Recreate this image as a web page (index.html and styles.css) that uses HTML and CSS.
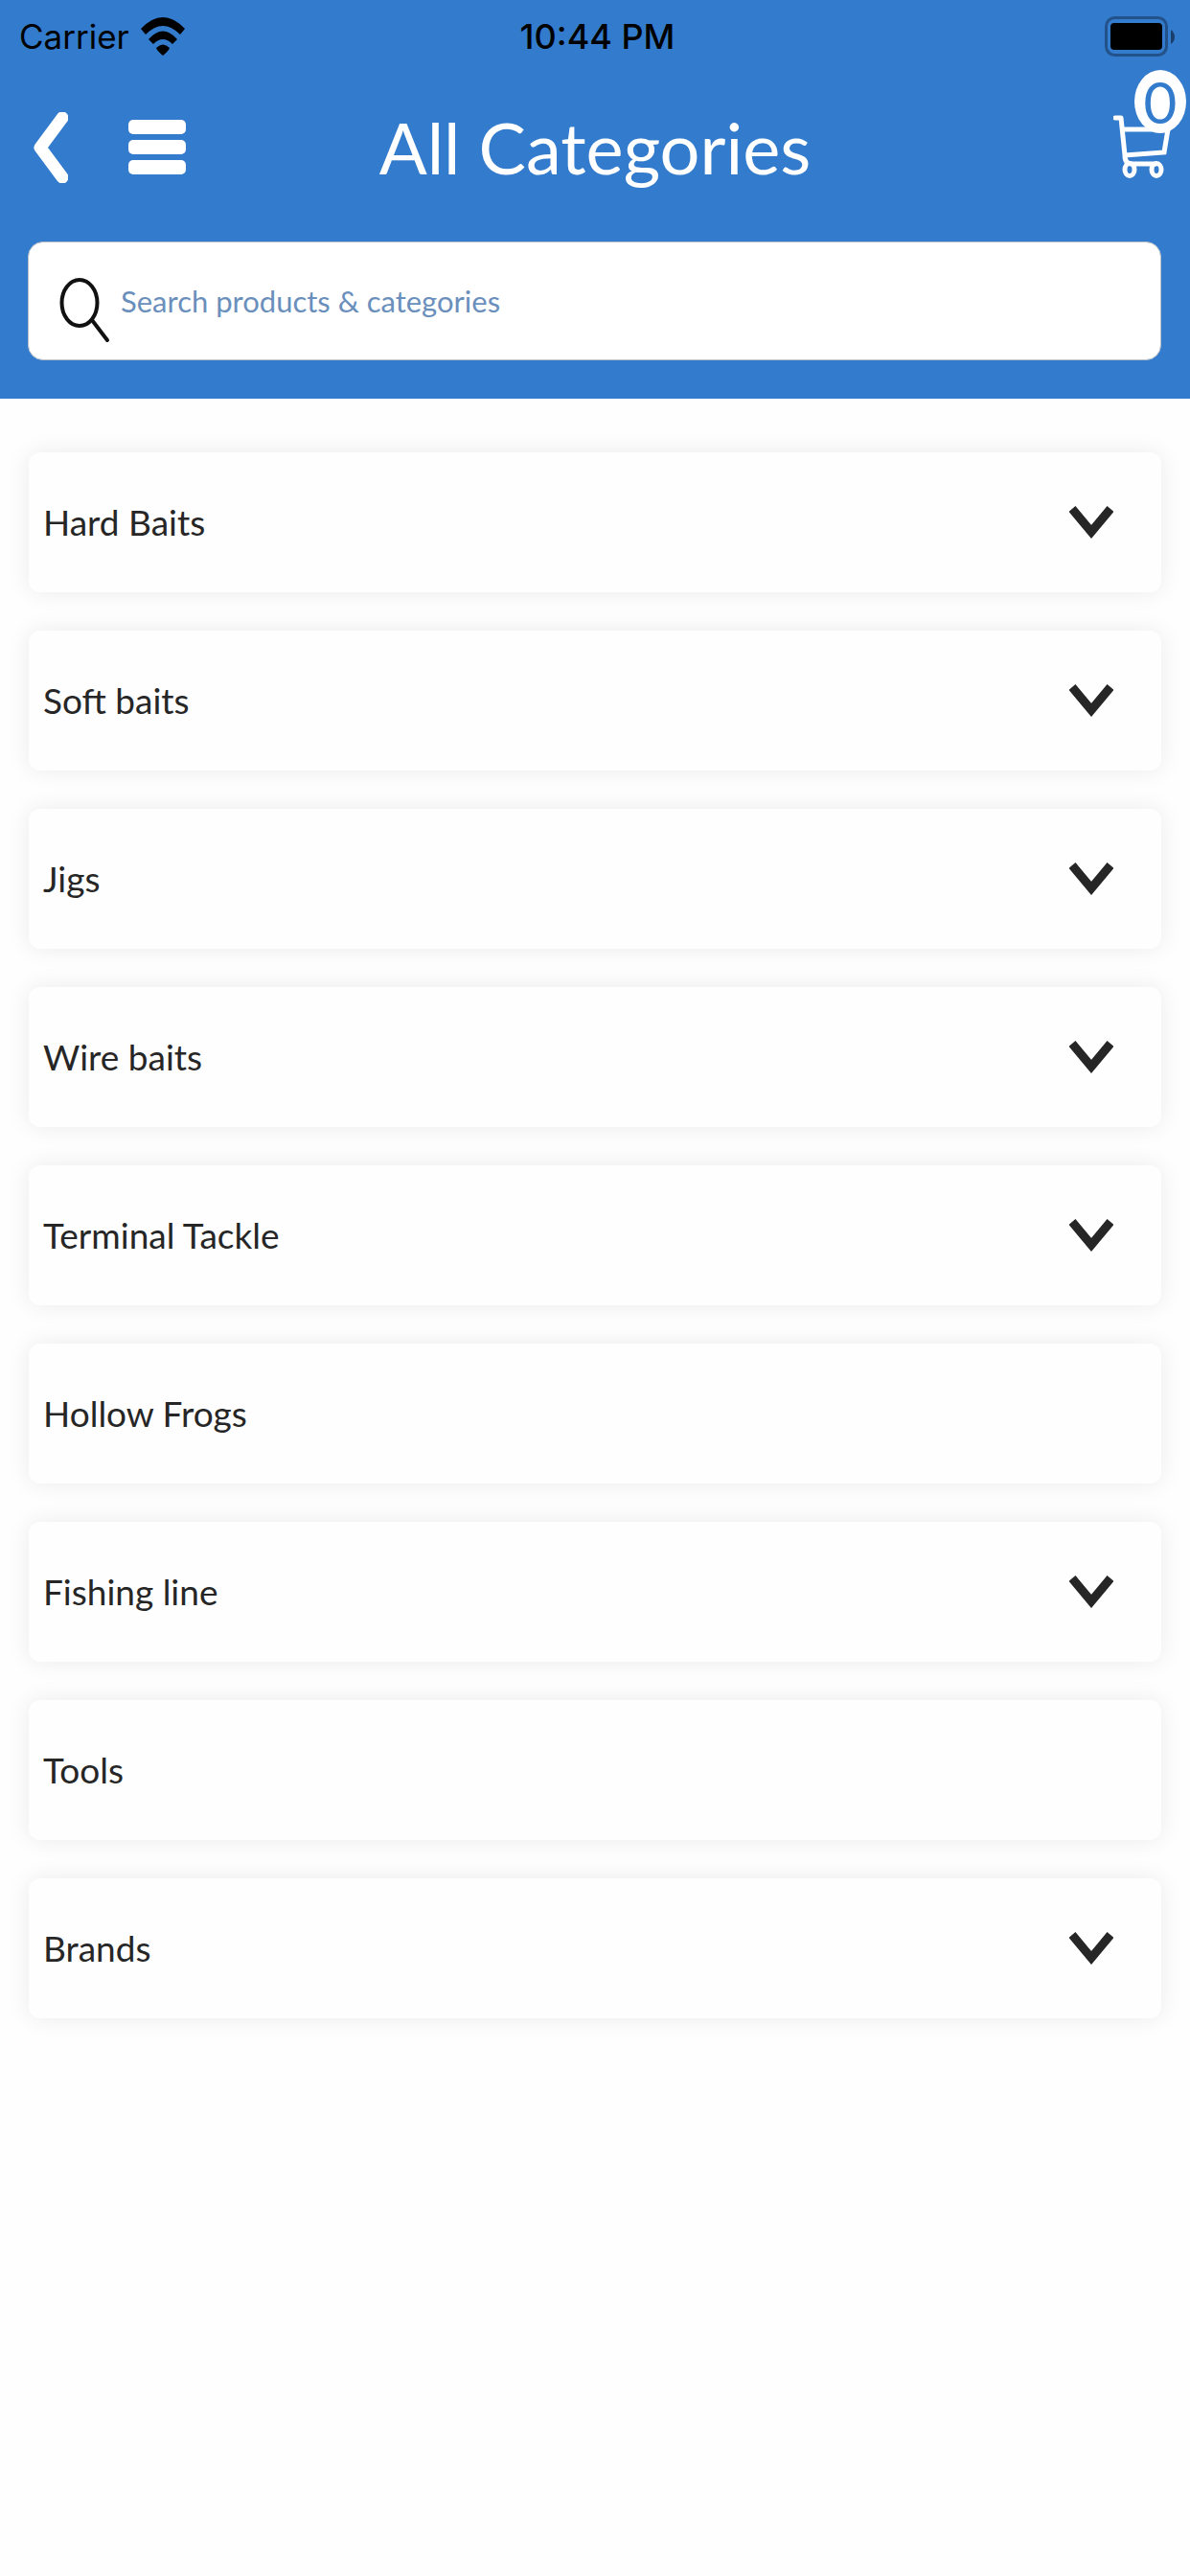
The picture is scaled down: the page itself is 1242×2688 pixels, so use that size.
FILE: index.html
```html
<!DOCTYPE html>
<html lang="en">
<head>
<meta charset="utf-8">
<meta name="viewport" content="width=device-width, initial-scale=1">
<title>All Categories</title>
<link rel="stylesheet" href="styles.css">
</head>
<body>
<header class="header">
  <div class="status">
    <div class="status-left">
      <span>Carrier</span>
      <svg class="wifi" viewBox="0 0 46 40" aria-hidden="true">
        <path d="M0 12Q23-12 46 12L41 18Q23 0 5 18Z"/>
        <path d="M8 23Q23 6 38 23L33 28Q23 18 13 28Z"/>
        <path d="M16 32Q23 25 30 32Q29 35 23 40Q17 35 16 32Z"/>
      </svg>
    </div>
    <span class="time">10:44 PM</span>
    <svg class="battery" viewBox="0 0 74 42" aria-label="Battery full" role="img">
      <rect x="1.500" y="1.500" width="63" height="39" rx="9" fill="none" stroke="#23528a" stroke-width="3"/>
      <rect x="6" y="7" width="54" height="28" rx="4"/>
      <path d="M69 14Q73 17 73 21.500T69 29Z" fill="#1b3f6b"/>
    </svg>
  </div>
  <nav class="bar">
    <div class="bar-left">
      <button class="icon-button" aria-label="Back">
        <svg class="back" viewBox="0 0 36 74"><path d="M30 6L7 37L30 68" fill="none" stroke="#fff" stroke-width="13" stroke-linecap="round" stroke-linejoin="round"/></svg>
      </button>
      <button class="icon-button" aria-label="Menu">
        <svg class="menu" viewBox="0 0 60 58" fill="#fff"><rect y="0" width="60" height="15" rx="5"/><rect y="21" width="60" height="15" rx="5"/><rect y="42" width="60" height="15" rx="5"/></svg>
      </button>
    </div>
    <h1 class="title">All Categories</h1>
    <button class="icon-button cart-button" aria-label="Cart">
      <svg class="cart" viewBox="0 0 60 70" fill="none" stroke="#fff" stroke-width="5">
        <path d="M2 4H8L12 43Q12 52 19 52H44" stroke-linejoin="round" stroke-linecap="round"/>
        <path d="M9 16H57L53 40L12 43"/>
        <ellipse cx="17" cy="58" rx="5" ry="6.500"/>
        <ellipse cx="45" cy="58" rx="5" ry="6.500"/>
      </svg>
      <span class="badge">0</span>
    </button>
  </nav>
  <label class="search">
    <svg class="search-icon" viewBox="0 0 54 70" fill="none" stroke="#111" stroke-width="4" stroke-linecap="round" aria-hidden="true"><ellipse cx="21" cy="27" rx="18.500" ry="24"/><path d="M34 45L50 66"/></svg>
    <input class="search-input" type="search" aria-label="Search" placeholder="Search products &amp; categories">
  </label>
</header>
<main>
  <ul class="list">
    <li><button class="card">Hard Baits<svg class="chevron" viewBox="0 0 46 34"><path d="M3 3L23 27L43 3" /></svg></button></li>
    <li><button class="card">Soft baits<svg class="chevron" viewBox="0 0 46 34"><path d="M3 3L23 27L43 3" /></svg></button></li>
    <li><button class="card">Jigs<svg class="chevron" viewBox="0 0 46 34"><path d="M3 3L23 27L43 3" /></svg></button></li>
    <li><button class="card">Wire baits<svg class="chevron" viewBox="0 0 46 34"><path d="M3 3L23 27L43 3" /></svg></button></li>
    <li><button class="card">Terminal Tackle<svg class="chevron" viewBox="0 0 46 34"><path d="M3 3L23 27L43 3" /></svg></button></li>
    <li><a class="card" href="#hollow-frogs">Hollow Frogs</a></li>
    <li><button class="card">Fishing line<svg class="chevron" viewBox="0 0 46 34"><path d="M3 3L23 27L43 3" /></svg></button></li>
    <li><a class="card" href="#tools">Tools</a></li>
    <li><button class="card">Brands<svg class="chevron" viewBox="0 0 46 34"><path d="M3 3L23 27L43 3" /></svg></button></li>
  </ul>
</main>
</body>
</html>
```
FILE: styles.css
```css
* {
  box-sizing: border-box;
}

body {
  margin: 0;
  background: #fefefe;
  color: #262626;
  font-family: Lato, sans-serif;
}

svg {
  display: block;
  flex: none;
}

.header {
  background: #337bcd;
  padding-bottom: 40px;
}

.status {
  display: grid;
  grid-template-columns: 1fr auto 1fr;
  align-items: center;
  height: 76px;
  padding: 0 15px 0 20px;
  color: #000;
  font: 400 36px/44px Inter, sans-serif;
}

.status-left {
  display: flex;
  align-items: center;
  gap: 12px;
  font-size: 35px;
}

.time {
  font-weight: 500;
}

.wifi {
  width: 46px;
  height: 40px;
}

.battery {
  width: 74px;
  height: 42px;
  justify-self: end;
}

.bar {
  display: grid;
  grid-template-columns: 1fr auto 1fr;
  align-items: center;
  height: 156px;
  padding: 0 20px;
}

.bar-left {
  display: flex;
  align-items: center;
  gap: 63px;
  padding-left: 15px;
}

.icon-button {
  padding: 0;
  border: 0;
  background: none;
  font: inherit;
  cursor: pointer;
}

.back {
  width: 36px;
  height: 74px;
}

.menu {
  width: 60px;
  height: 58px;
}

.title {
  margin: 0;
  color: #fff;
  font-size: 74px;
  font-weight: 400;
  line-height: 88px;
}

.cart-button {
  position: relative;
  justify-self: end;
}

.cart {
  width: 60px;
  height: 70px;
}

.badge {
  position: absolute;
  top: -46px;
  right: -16px;
  width: 54px;
  height: 66px;
  border-radius: 50%;
  background: #fff;
  color: #337bcd;
  font-size: 60px;
  line-height: 66px;
  text-align: center;
}

.search {
  display: flex;
  align-items: center;
  gap: 8px;
  height: 124px;
  margin: 20px 30px 0 29px;
  padding: 0 32px 0 30px;
  border: 1px solid #b9bfc6;
  border-radius: 16px;
  background: #fff;
}

.search-icon {
  width: 58px;
  height: 70px;
  margin-top: 20px;
}

.search-input {
  flex: 1;
  min-width: 0;
  padding: 0;
  border: 0;
  outline: 0;
  background: none;
  color: #262626;
  font: 400 31px/40px Lato, sans-serif;
}

.search-input::placeholder {
  color: #6a8fbc;
  opacity: 1;
}

.list {
  display: grid;
  gap: 40px;
  margin: 0;
  padding: 56px 30px;
  list-style: none;
}

.card {
  display: flex;
  align-items: center;
  justify-content: space-between;
  width: 100%;
  min-height: 146px;
  padding: 16px 50px 16px 15px;
  border: 0;
  border-radius: 12px;
  background: #fefefe;
  box-shadow: 0 0 24px rgba(0, 0, 0, 0.08);
  color: #262626;
  font: 400 37px/48px Lato, sans-serif;
  text-align: left;
  text-decoration: none;
}

.chevron {
  width: 46px;
  height: 34px;
  fill: none;
  stroke: #262626;
  stroke-width: 9;
}
```
